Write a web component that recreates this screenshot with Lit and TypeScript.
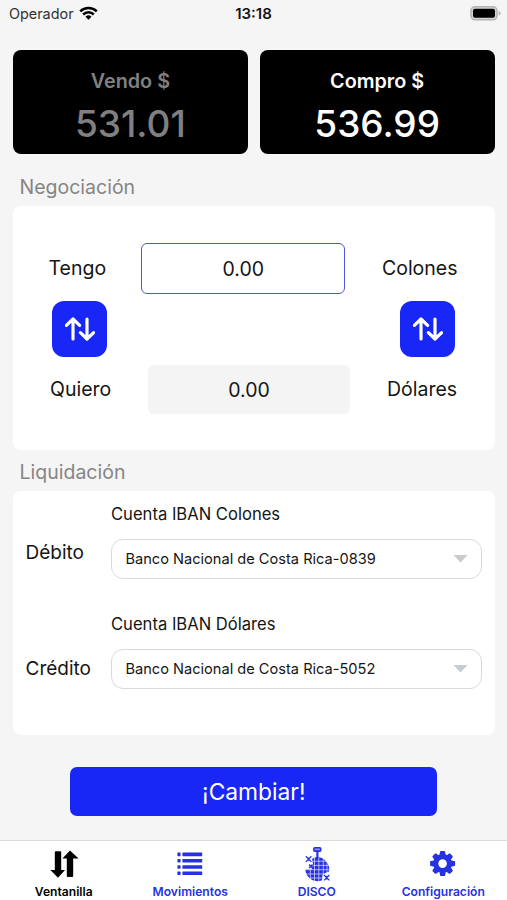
import { LitElement, html, svg, css } from "lit";
import { customElement, property } from "lit/decorators.js";

const swapIcon = svg`
  <svg width="30" height="24" viewBox="0 0 30 24" fill="none" stroke="#fff" stroke-width="3.2" stroke-linecap="round" stroke-linejoin="round">
    <path d="M8 22V2.2M1.4 8.4L8 2L14.6 8.4M22 2V21.8M15.4 15.6L22 22L28.6 15.6" />
  </svg>`;

const wifiIcon = svg`
  <svg width="19" height="15" viewBox="0 0 19 15" fill="none" stroke="#000" stroke-width="2.5">
    <path d="M1.2 5.4A11.8 11.8 0 0 1 17.8 5.4" />
    <path d="M4.2 8.5A7.5 7.5 0 0 1 14.8 8.5" />
    <path d="M9.5 13.7L6.5 10.7A4.3 4.3 0 0 1 12.5 10.7Z" fill="#000" stroke="none" />
  </svg>`;

const batteryIcon = svg`
  <svg width="31" height="16" viewBox="0 0 31 16">
    <rect x="1" y=".8" width="26" height="13" rx="4" fill="#d4d4d4" stroke="#b4b4b4" stroke-width="1.6" />
    <rect x="3" y="2.8" width="22" height="9" rx="2" fill="#000" />
    <path d="M28.6 5Q30.6 5.6 30.6 7.3T28.6 9.6Z" fill="#b4b4b4" />
  </svg>`;

const teeth = [0, 45, 90, 135, 180, 225, 270, 315];

const tabIcons: Record<string, unknown> = {
  ventanilla: svg`
    <svg width="32" height="32" viewBox="0 0 32 32" fill="currentColor">
      <path d="M6.8 6.2q0-1 1-1h4.4q1 0 1 1V24h3.8L10 31.8 2.4 24h4.4Z" />
      <path d="M18.8 30q0 1 1 1h4.4q1 0 1-1V12.6h5.4L22 4.6 14.4 12.6h4.4Z" />
    </svg>`,
  movimientos: svg`
    <svg width="32" height="32" viewBox="0 0 32 32" fill="currentColor">
      ${[6.6, 12.9, 19.2, 25.5].map(
        (y) => svg`<rect x="3.4" y=${y} width="3.2" height="3.6" rx=".8" /><rect x="8.4" y=${y} width="19.8" height="3.6" rx=".6" />`
      )}
    </svg>`,
  disco: svg`
    <svg width="32" height="36" viewBox="0 0 32 36" fill="none" stroke="currentColor">
      <rect x="12.9" y="1.7" width="6.8" height="3.4" rx=".8" stroke-width="1.6" fill="#8b92f0" />
      <path d="M16.4 5.3V13" stroke-width="2.2" />
      <path d="M14.5 11.2A12.2 12.2 0 0 1 28 25.5L24.5 27 21.5 29 21 34.3A12.2 12.2 0 0 1 4.3 23.6L10.5 23.5 12 18 11 13Z" fill="currentColor" stroke="none" />
      <path d="M11 15.2H26M12 19.4H28.5M4 23.7H28.5M5 28H24M9 32H21M9.3 24V33.5M13.5 11.5V35M17.8 11.5V35.5M22.3 12.5V29M26 16V27" stroke="#fff" stroke-opacity=".75" stroke-width=".8" />
      <path d="M4.8 10.3L10.4 15.9M10.4 10.3L4.8 15.9M7.6 11.4V14.8" stroke-width="1.3" />
      <path d="M8.2 18.6L11.6 22M11.6 18.6L8.2 22" stroke-width="1.6" />
      <path d="M23 29L28.4 34.4M28.4 29L23 34.4M25.7 29.8V33.6" stroke-width="1.3" />
    </svg>`,
  configuracion: svg`
    <svg width="32" height="32" viewBox="-16 -16 32 32" fill="currentColor">
      <circle r="6.9" cx="-.4" cy="1.6" fill="none" stroke="currentColor" stroke-width="5.2" />
      ${teeth.map(
        (a) => svg`<path transform="translate(-.4 1.6) rotate(${a})" d="M-3.2 -8L-2.5 -11.8Q-2.3 -12.5 -1.6 -12.5H1.6Q2.3 -12.5 2.5 -11.8L3.2 -8Z" />`
      )}
    </svg>`,
};

@customElement("rate-card")
class RateCard extends LitElement {
  @property() label = "";
  @property() value = "";
  @property({ type: Boolean, reflect: true }) active = false;

  static styles = css`
    :host {
      display: flex;
      flex-direction: column;
      align-items: center;
      flex: 1;
      box-sizing: border-box;
      height: 103.5px;
      padding-top: 16.5px;
      border-radius: 8px;
      background: #000;
      color: #808080;
      font-weight: 600;
    }
    :host([active]) { color: #fff; }
    .label { font-size: 19.8px; line-height: 28px; }
    .value { font-size: 37px; line-height: 58px; font-weight: 500; }
  `;

  render() {
    return html`<div class="label">${this.label}</div><div class="value">${this.value}</div>`;
  }
}

@customElement("account-picker")
class AccountPicker extends LitElement {
  @property() side = "";
  @property() caption = "";
  @property() account = "";

  static styles = css`
    :host { display: grid; grid-template-columns: 85.5px 371px; padding-left: 12.5px; height: 110px; grid-template-rows: 24px 62px; }
    .caption { grid-column: 2; font-size: 16.6px; line-height: 24px; }
    .side { font-size: 19px; line-height: 26px; align-self: start; padding-top: 14px; }
    :host([last]) .side { padding-top: 20px; }
    .select {
      display: flex;
      align-items: center;
      justify-content: space-between;
      box-sizing: border-box;
      height: 40px;
      margin-top: 13px;
      padding: 0 13px 0 13.5px;
      border: 1.5px solid #d8dbdc;
      border-radius: 12px;
      font-size: 14.6px;
    }
    .arrow { width: 15px; height: 8px; background: #c9cccf; clip-path: polygon(0 0, 100% 0, 50% 100%); }
  `;

  render() {
    return html`
      <div class="caption">${this.caption}</div>
      <div class="side">${this.side}</div>
      <div class="select"><span>${this.account}</span><span class="arrow"></span></div>
    `;
  }
}

@customElement("app-root")
class AppRoot extends LitElement {
  static styles = css`
    :host {
      display: flex;
      flex-direction: column;
      width: 507px;
      height: 900px;
      overflow: hidden;
      background: #f5f5f5;
      color: #151515;
      font-family: Inter, "Liberation Sans", sans-serif;
      white-space: nowrap;
    }
    svg { display: block; flex: none; }
    .status {
      display: grid;
      grid-template-columns: 1fr auto 1fr;
      align-items: center;
      height: 27px;
      padding: 0 8px 0 9px;
      font-size: 14.4px;
    }
    .carrier { display: flex; align-items: center; gap: 5.5px; color: #333; }
    .clock { font-weight: 600; font-size: 15px; margin-left: -1px; }
    .battery { justify-self: end; margin-right: -2px; }
    .rates { display: flex; gap: 12px; padding: 23px 12.5px 0 13px; }
    .heading { padding-left: 19.5px; font-size: 19.5px; color: #858585; line-height: 28px; }
    .negotiation-heading { margin-top: 19.5px; }
    .settlement-heading { margin-top: 8px; }
    .panel { box-sizing: border-box; margin: 5px 12.5px 0 13px; height: 244px; border-radius: 8px; background: #fff; }
    .negotiation { padding-top: 36.5px; font-size: 19.5px; }
    .row { display: flex; align-items: center; }
    .row.have { height: 51px; padding: 0 37px 0 35.5px; }
    .row.swap { height: 56px; margin-top: 7.5px; padding: 0 39.5px 0 39px; justify-content: space-between; }
    .row.want { height: 49px; margin-top: 7.5px; padding-left: 37px; }
    .have .name { width: 93px; }
    .want .name { width: 98px; }
    .name, .currency { padding-bottom: 1px; }
    .amount { display: flex; align-items: center; justify-content: center; box-sizing: border-box; border-radius: 6px; }
    .have .amount { width: 205px; height: 51px; border: 1.5px solid #4c56e0; padding-top: 1px; }
    .want .amount { width: 202px; height: 49px; background: #f4f4f4; padding-top: 1px; }
    .have .currency { margin-left: 36.5px; }
    .want .currency { margin-left: 37px; }
    .swap-button { display: grid; place-items: center; width: 55px; height: 56px; border-radius: 12px; background: #1827f5; }
    .settlement { padding-top: 10.5px; }
    .submit {
      display: grid;
      place-items: center;
      width: 367px;
      height: 49px;
      margin: 32px 0 0 70.3px;
      border-radius: 7px;
      background: #1827f5;
      color: #fff;
      font-size: 22.8px;
    }
    .tabs {
      display: grid;
      grid-template-columns: repeat(4, 1fr);
      box-sizing: border-box;
      height: 60.5px;
      margin-top: auto;
      padding: 0 .5px;
      border-top: 1.5px solid #dcdcdc;
      background: #fff;
    }
    .tab { display: flex; flex-direction: column; align-items: center; font-size: 12.1px; font-weight: 600; color: #2632e2; }
    .tab.current { color: #000; }
    .tab .icon { display: flex; justify-content: center; height: 42px; padding-top: 5px; box-sizing: border-box; }
    .tab .label { line-height: 18px; }
  `;

  private tabs = [
    { id: "ventanilla", label: "Ventanilla" },
    { id: "movimientos", label: "Movimientos" },
    { id: "disco", label: "DISCO" },
    { id: "configuracion", label: "Configuración" },
  ];

  render() {
    return html`
      <div class="status">
        <div class="carrier"><span>Operador</span>${wifiIcon}</div>
        <div class="clock">13:18</div>
        <div class="battery">${batteryIcon}</div>
      </div>
      <div class="rates">
        <rate-card label="Vendo $" value="531.01"></rate-card>
        <rate-card label="Compro $" value="536.99" active></rate-card>
      </div>
      <div class="heading negotiation-heading">Negociación</div>
      <div class="panel negotiation">
        <div class="row have">
          <span class="name">Tengo</span><span class="amount">0.00</span><span class="currency">Colones</span>
        </div>
        <div class="row swap">
          <div class="swap-button">${swapIcon}</div>
          <div class="swap-button">${swapIcon}</div>
        </div>
        <div class="row want">
          <span class="name">Quiero</span><span class="amount">0.00</span><span class="currency">Dólares</span>
        </div>
      </div>
      <div class="heading settlement-heading">Liquidación</div>
      <div class="panel settlement">
        <account-picker side="Débito" caption="Cuenta IBAN Colones" account="Banco Nacional de Costa Rica-0839"></account-picker>
        <account-picker last side="Crédito" caption="Cuenta IBAN Dólares" account="Banco Nacional de Costa Rica-5052"></account-picker>
      </div>
      <div class="submit">¡Cambiar!</div>
      <div class="tabs">
        ${this.tabs.map(
          (t, i) => html`<div class="tab ${i === 0 ? "current" : ""}">
            <div class="icon">${tabIcons[t.id]}</div>
            <div class="label">${t.label}</div>
          </div>`
        )}
      </div>
    `;
  }
}
